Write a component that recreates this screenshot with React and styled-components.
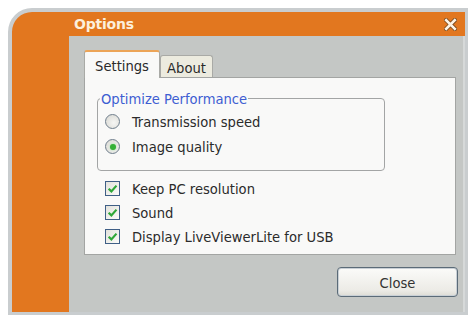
import React from "react";
import styled, { createGlobalStyle } from "styled-components";

const Global = createGlobalStyle`
  html, body { margin: 0; padding: 0; background: #ffffff; }
  body { font-family: "DejaVu Sans Condensed", "DejaVu Sans", sans-serif; }
`;

const Page = styled.div`
  width: 470px;
  height: 318px;
  padding: 8px 2px 3px 8px;
  box-sizing: border-box;
`;

const Frame = styled.div`
  box-sizing: border-box;
  width: 460px;
  height: 307px;
  border-style: solid;
  border-color: #c9cdcf;
  border-width: 4px 3px 3px 4px;
  border-top-left-radius: 24px;
  background: #e2771f;
  overflow: hidden;
  display: grid;
  grid-template-columns: 57px 1fr;
  grid-template-rows: 24px 1fr;
`;

const TitleBar = styled.div`
  grid-column: 2;
  grid-row: 1;
  display: flex;
  align-items: center;
  justify-content: space-between;
  padding: 0 8px 0 5px;
  color: #fcefdc;
  font-family: "DejaVu Sans", sans-serif;
  font-weight: bold;
  font-size: 14px;
  letter-spacing: -0.2px;
`;

const Body = styled.div`
  grid-column: 2;
  grid-row: 2;
  background: #c4c7c5;
  border-right: 2px solid #d6d9d9;
  padding: 14px 7px 0 15px;
  display: flex;
  flex-direction: column;
`;

const TabRow = styled.div`
  display: flex;
  align-items: flex-end;
  height: 27px;
`;

const Tab = styled.div`
  box-sizing: border-box;
  display: flex;
  align-items: center;
  justify-content: center;
  font-size: 14.6px;
  color: #2a2a2a;
  border: 1px solid #a9aaa6;
  border-bottom: none;
  height: ${(p) => (p.$active ? "28px" : "22px")};
  width: ${(p) => p.$w}px;
  background: ${(p) => (p.$active ? "#f9f9f8" : "#ecebdf")};
  border-top: ${(p) => (p.$active ? "2px solid #eca457" : "1px solid #a9aaa6")};
  border-radius: 3px 3px 0 0;
  margin-bottom: ${(p) => (p.$active ? "-1px" : "0")};
  position: relative;
  z-index: ${(p) => (p.$active ? 1 : 0)};
  padding-top: ${(p) => (p.$active ? "0" : "2px")};
`;

const Panel = styled.div`
  box-sizing: border-box;
  width: 372px;
  height: 178px;
  background: #f9f9f8;
  border: 1px solid #a3a5a3;
  padding: 12px 0 0 12px;
  display: flex;
  flex-direction: column;
`;

const Group = styled.fieldset`
  box-sizing: border-box;
  margin: 0;
  width: 288px;
  border: 1px solid #a3a5a5;
  border-radius: 4px;
  padding: 2px 0 11px 7px;
`;

const Legend = styled.legend`
  padding: 0 1px;
  margin-left: -5px;
  font-size: 14.6px;
  line-height: 17px;
  color: #3e5ed2;
`;

const Row = styled.div`
  display: flex;
  align-items: center;
  height: ${(p) => p.$h}px;
  font-size: 14.6px;
  color: #2b2b2b;
  gap: 12px;
`;

const Radio = styled.span`
  box-sizing: border-box;
  width: 15px;
  height: 15px;
  border-radius: 50%;
  border: 1.5px solid #6f7e8c;
  background: radial-gradient(circle at 60% 60%, #f6f6f4 0%, #d6d6d0 100%);
  display: flex;
  align-items: center;
  justify-content: center;
  &::after {
    content: "";
    width: 6px;
    height: 6px;
    border-radius: 50%;
    background: #35b036;
    box-shadow: 0 0 2px #8bd88b;
    display: ${(p) => (p.$on ? "block" : "none")};
  }
`;

const CheckList = styled.div`
  display: flex;
  flex-direction: column;
  margin-top: 5px;
  padding-left: 8px;
`;

const Box = styled.span`
  box-sizing: border-box;
  width: 15px;
  height: 15px;
  border: 1px solid #3f5f86;
  background: linear-gradient(135deg, #e2e2dc, #fbfbf8);
  display: flex;
  align-items: center;
  justify-content: center;
`;

const Footer = styled.div`
  display: flex;
  justify-content: flex-end;
  padding: 12px 0 0 0;
  margin-right: -2px;
`;

const Button = styled.button`
  box-sizing: border-box;
  width: 121px;
  height: 30px;
  border: 1px solid #5b6b78;
  box-shadow: inset 0 0 0 1px #c9d0d6;
  border-radius: 4px;
  background: linear-gradient(#fbfbf9, #ecebe6 80%, #dddcd5);
  font-family: "DejaVu Sans Condensed", "DejaVu Sans", sans-serif;
  font-size: 14.6px;
  color: #333;
  padding: 0;
`;

const Check = () => (
  <svg width="11" height="11" viewBox="0 0 10 10">
    <path d="M1.5 5.2 L4 7.6 L8.6 2.4" fill="none" stroke="#2fa838" strokeWidth="2" />
  </svg>
);

const CloseX = () => (
  <svg width="13" height="13" viewBox="0 0 12 12">
    <path d="M2 2 L10 10 M10 2 L2 10" stroke="#7a4a1e" strokeWidth="4" strokeLinecap="square" />
    <path d="M2 2 L10 10 M10 2 L2 10" stroke="#fdf3e4" strokeWidth="2.4" strokeLinecap="square" />
  </svg>
);

export default function App() {
  return (
    <Page>
      <Global />
      <Frame>
        <TitleBar>
          <span>Options</span>
          <CloseX />
        </TitleBar>
        <Body>
          <TabRow>
            <Tab $active $w={76}>Settings</Tab>
            <Tab $w={53}>About</Tab>
          </TabRow>
          <Panel>
            <Group>
              <Legend>Optimize Performance</Legend>
              <Row $h={25}>
                <Radio />
                Transmission speed
              </Row>
              <Row $h={25}>
                <Radio $on />
                Image quality
              </Row>
            </Group>
            <CheckList>
              <Row $h={24}>
                <Box><Check /></Box>
                Keep PC resolution
              </Row>
              <Row $h={24}>
                <Box><Check /></Box>
                Sound
              </Row>
              <Row $h={24}>
                <Box><Check /></Box>
                Display LiveViewerLite for USB
              </Row>
            </CheckList>
          </Panel>
          <Footer>
            <Button>Close</Button>
          </Footer>
        </Body>
      </Frame>
    </Page>
  );
}
